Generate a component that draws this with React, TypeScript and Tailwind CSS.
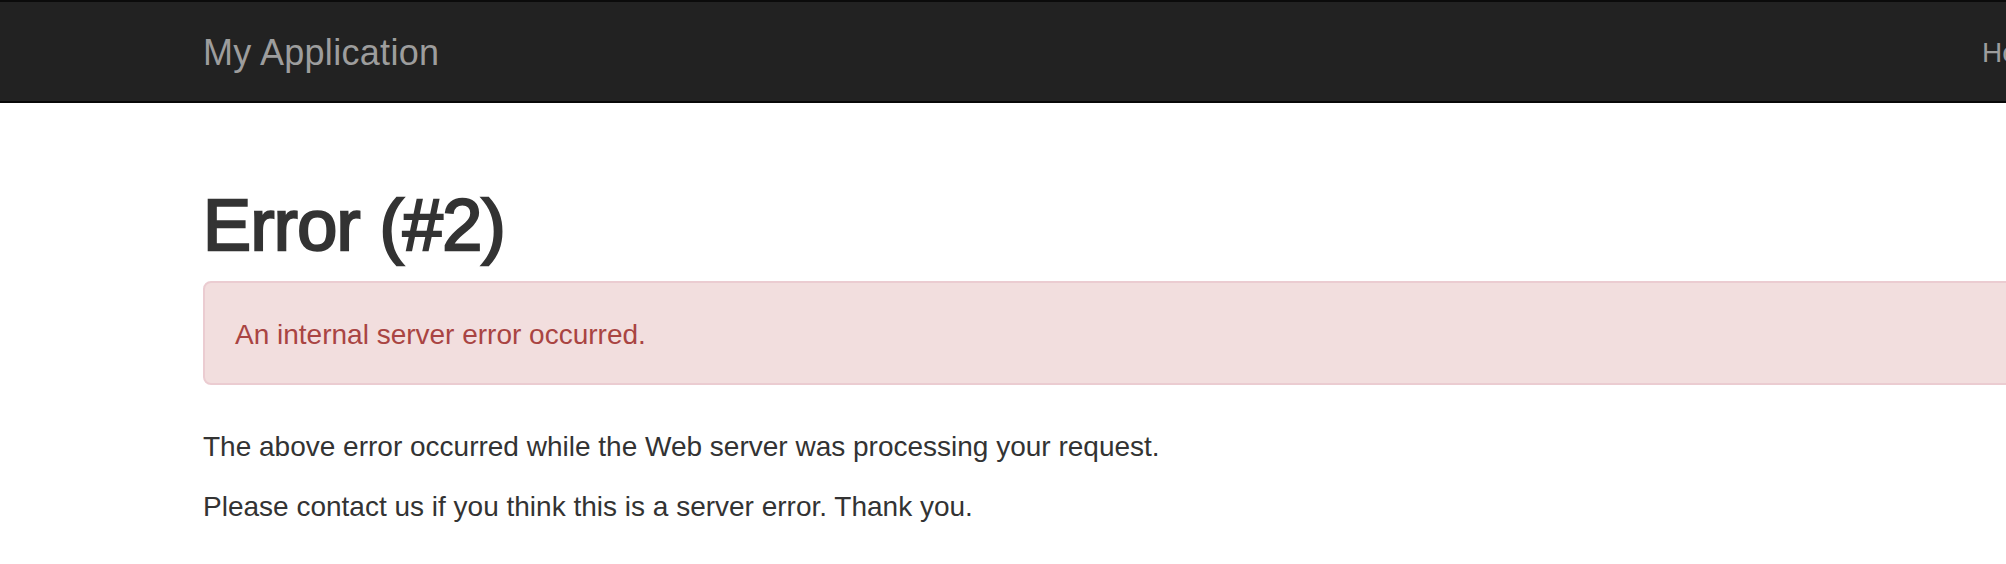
import React from 'react';

const sans = 'font-["Liberation_Sans","Helvetica_Neue",Helvetica,Arial,sans-serif]';

function Navbar() {
    return (
        <nav className="w-full bg-[#222222] border-t-2 border-b-2 border-t-[#0b0b0b] border-b-[#080808]">
            <div className="flex items-start pl-[203px] h-[99px]">
                {/* Brand */}
                <a className="shrink-0 w-[1779px] pt-[31px] text-[36px] leading-[40px] tracking-[0.3px] text-[#9d9d9d]">
                    My Application
                </a>
                {/* Right nav, cut off by the window edge */}
                <ul className="flex shrink-0 pt-[31px] text-[28px] leading-[40px] text-[#9d9d9d] whitespace-nowrap">
                    <li>Home</li>
                    <li className="ml-[60px]">About</li>
                </ul>
            </div>
        </nav>
    );
}

export default function App() {
    return (
        <div className={`w-full h-[564px] overflow-hidden bg-white ${sans}`}>
            <Navbar />

            <main className="w-[2500px] pl-[203px] pt-[82px] text-[#333333]">
                <h1 className="text-[72px] leading-[80px] font-normal tracking-[-0.6px] [-webkit-text-stroke:2.4px_#333333]">
                    Error (#2)
                </h1>

                {/* Alert */}
                <div className="mt-[16px] mb-[42px] border-2 border-[#ebccd1] bg-[#f2dede] rounded-[8px] pt-[32px] pb-[28px] px-[30px] text-[28px] leading-[40px] text-[#a94442]">
                    An internal server error occurred.
                </div>

                <p className="text-[28px] leading-[40px] mb-[20px]">
                    The above error occurred while the Web server was processing your request.
                </p>
                <p className="text-[28px] leading-[40px] mb-[20px]">
                    Please contact us if you think this is a server error. Thank you.
                </p>
            </main>
        </div>
    );
}
